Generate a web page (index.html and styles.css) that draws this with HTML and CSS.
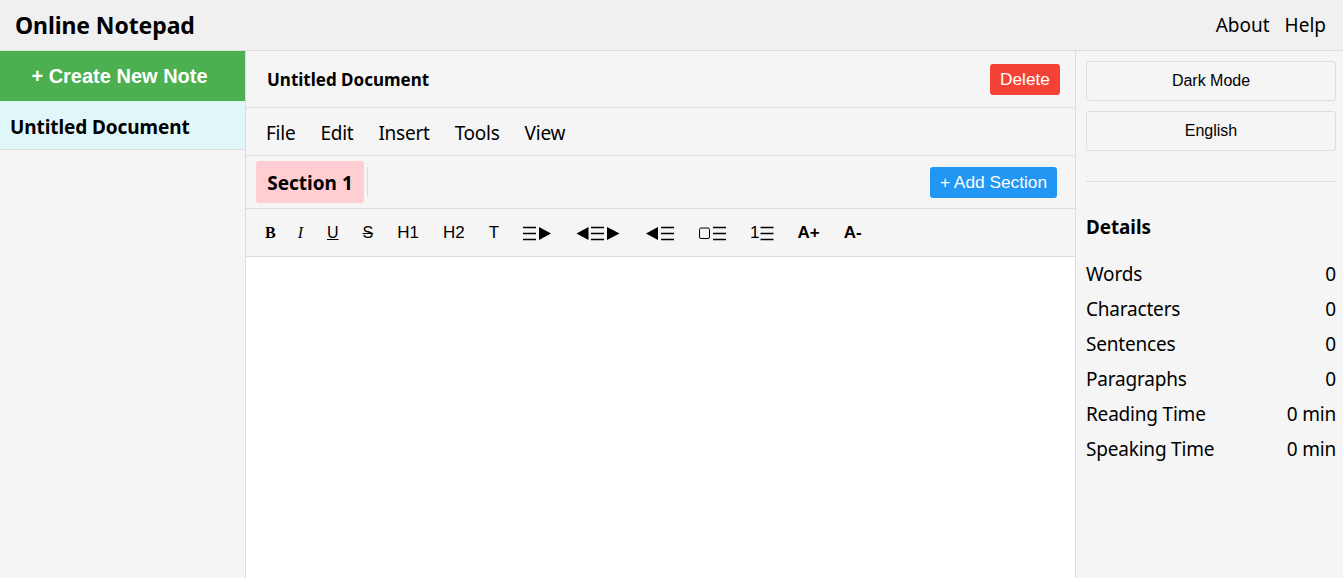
FILE: index.html
```
<!DOCTYPE html>
<html lang="en">
<head>
<meta charset="utf-8">
<title>Online Notepad</title>
<link rel="stylesheet" href="styles.css">
</head>
<body>
<header class="topbar">
  <h1 class="brand">Online Notepad</h1>
  <nav class="topnav"><a>About</a><a>Help</a></nav>
</header>
<div class="app">
  <aside class="notes">
    <button class="create">+ Create New Note</button>
    <div class="note-item">Untitled Document</div>
  </aside>
  <main class="main">
    <div class="titlebar">
      <span class="doc-title">Untitled Document</span>
      <button class="delete">Delete</button>
    </div>
    <div class="menubar"><span>File</span><span>Edit</span><span>Insert</span><span>Tools</span><span>View</span></div>
    <div class="sections">
      <div class="tab">Section 1</div>
      <div class="tab-sep"></div>
      <button class="add">+ Add Section</button>
    </div>
    <div class="toolbar">
      <button class="tool serif"><b>B</b></button>
      <button class="tool serif italic"><i>I</i></button>
      <button class="tool small"><u>U</u></button>
      <button class="tool small"><s>S</s></button>
      <button class="tool">H1</button>
      <button class="tool">H2</button>
      <button class="tool">T</button>
      <button class="tool" aria-label="Indent"><svg class="ic w28" viewBox="0 0 28 15"><path d="M0 1.5h13M0 7.5h13M0 13.5h13" stroke="#000" stroke-width="1.3" fill="none"/><path d="M16 1l12 6.5-12 6.5z"/></svg></button>
      <button class="tool" aria-label="Center"><svg class="ic w45" viewBox="0 0 45 15"><path d="M13.5 1v13l-12-6.5z"/><path d="M16 1.5h13M16 7.5h13M16 13.5h13" stroke="#000" stroke-width="1.3" fill="none"/><path d="M32 1l12.5 6.5-12.5 6.5z"/></svg></button>
      <button class="tool" aria-label="Outdent"><svg class="ic w30" viewBox="0 0 30 15"><path d="M14 1v13L2 7.5z"/><path d="M17 1.5h13M17 7.5h13M17 13.5h13" stroke="#000" stroke-width="1.3" fill="none"/></svg></button>
      <button class="tool" aria-label="Checklist"><svg class="ic w28" viewBox="0 0 28 15"><rect x="1.5" y="2" width="10" height="10.5" rx="1.5" fill="none" stroke="#000"/><path d="M15 1.5h13M15 7.5h13M15 13.5h13" stroke="#000" stroke-width="1.3" fill="none"/></svg></button>
      <button class="tool">1<svg class="ic w14" viewBox="0 0 14 15"><path d="M.5 1.5h13M.5 7.5h13M.5 13.5h13" stroke="#000" stroke-width="1.3" fill="none"/></svg></button>
      <button class="tool strong">A+</button>
      <button class="tool strong">A-</button>
    </div>
    <div class="editor"></div>
  </main>
  <aside class="side">
    <button class="ghost">Dark Mode</button>
    <button class="ghost">English</button>
    <hr class="rule">
    <h2 class="details">Details</h2>
    <dl class="stats">
      <div><dt>Words</dt><dd>0</dd></div>
      <div><dt>Characters</dt><dd>0</dd></div>
      <div><dt>Sentences</dt><dd>0</dd></div>
      <div><dt>Paragraphs</dt><dd>0</dd></div>
      <div><dt>Reading Time</dt><dd>0 min</dd></div>
      <div><dt>Speaking Time</dt><dd>0 min</dd></div>
    </dl>
  </aside>
</div>
</body>
</html>
```
FILE: styles.css
```
* { box-sizing: border-box; }
html, body { height: 100%; }
body {
  margin: 0;
  height: 578px;
  overflow: hidden;
  display: flex;
  flex-direction: column;
  font-family: "Noto Sans", "Open Sans", sans-serif;
  color: #000;
  background: #f5f5f5;
}
button { font-family: "Liberation Sans", Arial, sans-serif; cursor: pointer; }
.topbar {
  height: 51px;
  flex: none;
  display: flex;
  align-items: center;
  justify-content: space-between;
  padding: 0 17px 0 15px;
  background: #f0f0f0;
  border-bottom: 1px solid #ddd;
}
.brand { margin: 0; font-size: 23px; font-weight: 700; letter-spacing: -0.1px; }
.topnav { display: flex; gap: 15px; font-size: 19px; }
.app { flex: 1; display: flex; min-height: 0; }
.notes { width: 246px; flex: none; border-right: 1px solid #ddd; background: #f5f5f5; }
.create {
  display: block;
  width: 100%;
  height: 50px;
  padding: 0 6px 0 0;
  border: 0;
  background: #4caf50;
  color: #fff;
  font-size: 20px;
  font-weight: 700;
}
.note-item {
  height: 49px;
  padding-left: 10px;
  line-height: 53px;
  background: #e0f7fa;
  border-bottom: 1px solid #ddd;
  font-size: 19px;
  font-weight: 700;
  letter-spacing: -0.1px;
}
.main { flex: 1; display: flex; flex-direction: column; min-width: 0; }
.titlebar {
  height: 57px;
  flex: none;
  display: flex;
  align-items: center;
  justify-content: space-between;
  padding: 0 15px 0 21px;
  border-bottom: 1px solid #ddd;
}
.doc-title { font-size: 17px; font-weight: 700; }
.delete {
  width: 70px;
  height: 31px;
  padding: 0;
  border: 0;
  border-radius: 3px;
  background: #f44336;
  color: #fff;
  font-size: 17.3px;
}
.menubar {
  height: 48px;
  flex: none;
  display: flex;
  align-items: center;
  gap: 25px;
  padding: 2px 0 0 20px;
  border-bottom: 1px solid #ddd;
  font-size: 19px;
  letter-spacing: -0.25px;
}
.sections {
  height: 53px;
  flex: none;
  display: flex;
  align-items: center;
  padding: 0 18px 0 10px;
  border-bottom: 1px solid #ddd;
}
.tab {
  width: 108px;
  height: 42px;
  line-height: 45px;
  text-align: center;
  background: #ffcdd2;
  border-radius: 3px;
  font-size: 19px;
  font-weight: 700;
}
.tab-sep { width: 1px; height: 30px; margin-left: 3px; background: #ddd; }
.add {
  width: 127px;
  height: 31px;
  margin-left: auto;
  padding: 0;
  border: 0;
  border-radius: 3px;
  background: #2196f3;
  color: #fff;
  font-size: 17.3px;
}
.toolbar {
  height: 48px;
  flex: none;
  display: flex;
  align-items: center;
  gap: 2px;
  padding-left: 9px;
  border-bottom: 1px solid #ddd;
}
.tool {
  display: flex;
  align-items: center;
  height: 30px;
  padding: 0 11px;
  border: 0;
  background: none;
  color: #000;
  font-size: 17px;
}
.serif { font-family: "Liberation Serif", serif; font-size: 16px; padding: 0 10px; }
.italic { padding-right: 11px; }
.small { font-size: 16px; }
.strong { font-weight: 700; }
.ic { display: block; height: 15px; fill: #000; margin-top: 2px; }
.w28 { width: 28px; }
.w30 { width: 30px; }
.w45 { width: 45px; }
.w14 { width: 14px; }
.editor { flex: 1; background: #fff; }
.side {
  width: 268px;
  flex: none;
  padding: 10px 7px 0 10px;
  border-left: 1px solid #ddd;
}
.ghost {
  display: block;
  width: 100%;
  height: 40px;
  margin-bottom: 10px;
  padding: 0;
  border: 1px solid #ddd;
  border-radius: 3px;
  background: #f5f5f5;
  color: #000;
  font-size: 16px;
}
.rule { margin: 30px 0 0; border: 0; border-top: 1px solid #ddd; }
.details { margin: 33px 0 0; font-size: 18.8px; font-weight: 700; line-height: 25px; }
.stats { margin: 22px 0 0; font-size: 19px; letter-spacing: -0.2px; }
.stats div { display: flex; justify-content: space-between; height: 35px; line-height: 25px; }
.stats dt, .stats dd { margin: 0; }
```
